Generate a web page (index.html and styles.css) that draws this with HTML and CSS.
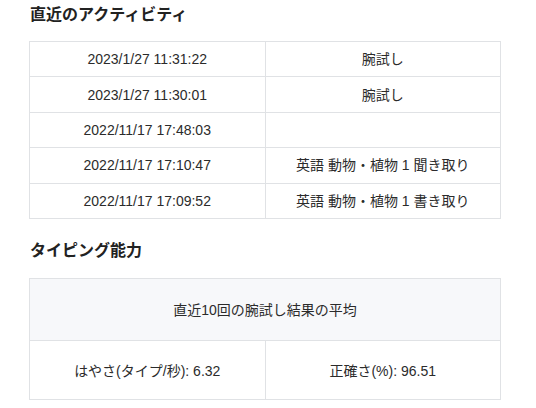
FILE: index.html
```html
<!DOCTYPE html>
<html lang="ja">
<head>
<meta charset="utf-8">
<link rel="stylesheet" href="styles.css">
</head>
<body>
<main class="page">
  <section class="section">
    <h2 class="heading">直近のアクティビティ</h2>
    <table class="grid activity">
      <tbody>
        <tr><td>2023/1/27 11:31:22</td><td>腕試し</td></tr>
        <tr><td>2023/1/27 11:30:01</td><td>腕試し</td></tr>
        <tr><td>2022/11/17 17:48:03</td><td></td></tr>
        <tr><td>2022/11/17 17:10:47</td><td>英語 動物・植物 1 聞き取り</td></tr>
        <tr><td>2022/11/17 17:09:52</td><td>英語 動物・植物 1 書き取り</td></tr>
      </tbody>
    </table>
  </section>
  <section class="section second">
    <h2 class="heading">タイピング能力</h2>
    <table class="grid ability">
      <thead>
        <tr><th colspan="2">直近10回の腕試し結果の平均</th></tr>
      </thead>
      <tbody>
        <tr><td>はやさ(タイプ/秒): 6.32</td><td>正確さ(%): 96.51</td></tr>
      </tbody>
    </table>
  </section>
</main>
</body>
</html>
```
FILE: styles.css
```css
html, body {
  margin: 0;
  padding: 0;
  background: #ffffff;
}
body {
  font-family: "Liberation Sans", "Noto Sans CJK JP", sans-serif;
  color: #2b2b2b;
}
.page {
  padding: 3px 35px 0 29px;
}
.heading {
  margin: 0;
  font-size: 16px;
  line-height: 24px;
  font-weight: 700;
  color: #222222;
  padding-left: 1px;
}
.grid {
  width: 472px;
  border-collapse: collapse;
  table-layout: fixed;
  margin-top: 14px;
}
.grid td, .grid th {
  border: 1px solid #e0e2e5;
  text-align: center;
  font-size: 14px;
  font-weight: 400;
  color: #2b2b2b;
  padding: 0;
}
.activity td {
  height: 34.4px;
  line-height: 20px;
}
.second {
  margin-top: 20px;
}
.ability {
  margin-top: 15px;
}
.ability th {
  background: #f7f8fa;
  height: 61px;
}
.ability td {
  height: 58px;
}
```
